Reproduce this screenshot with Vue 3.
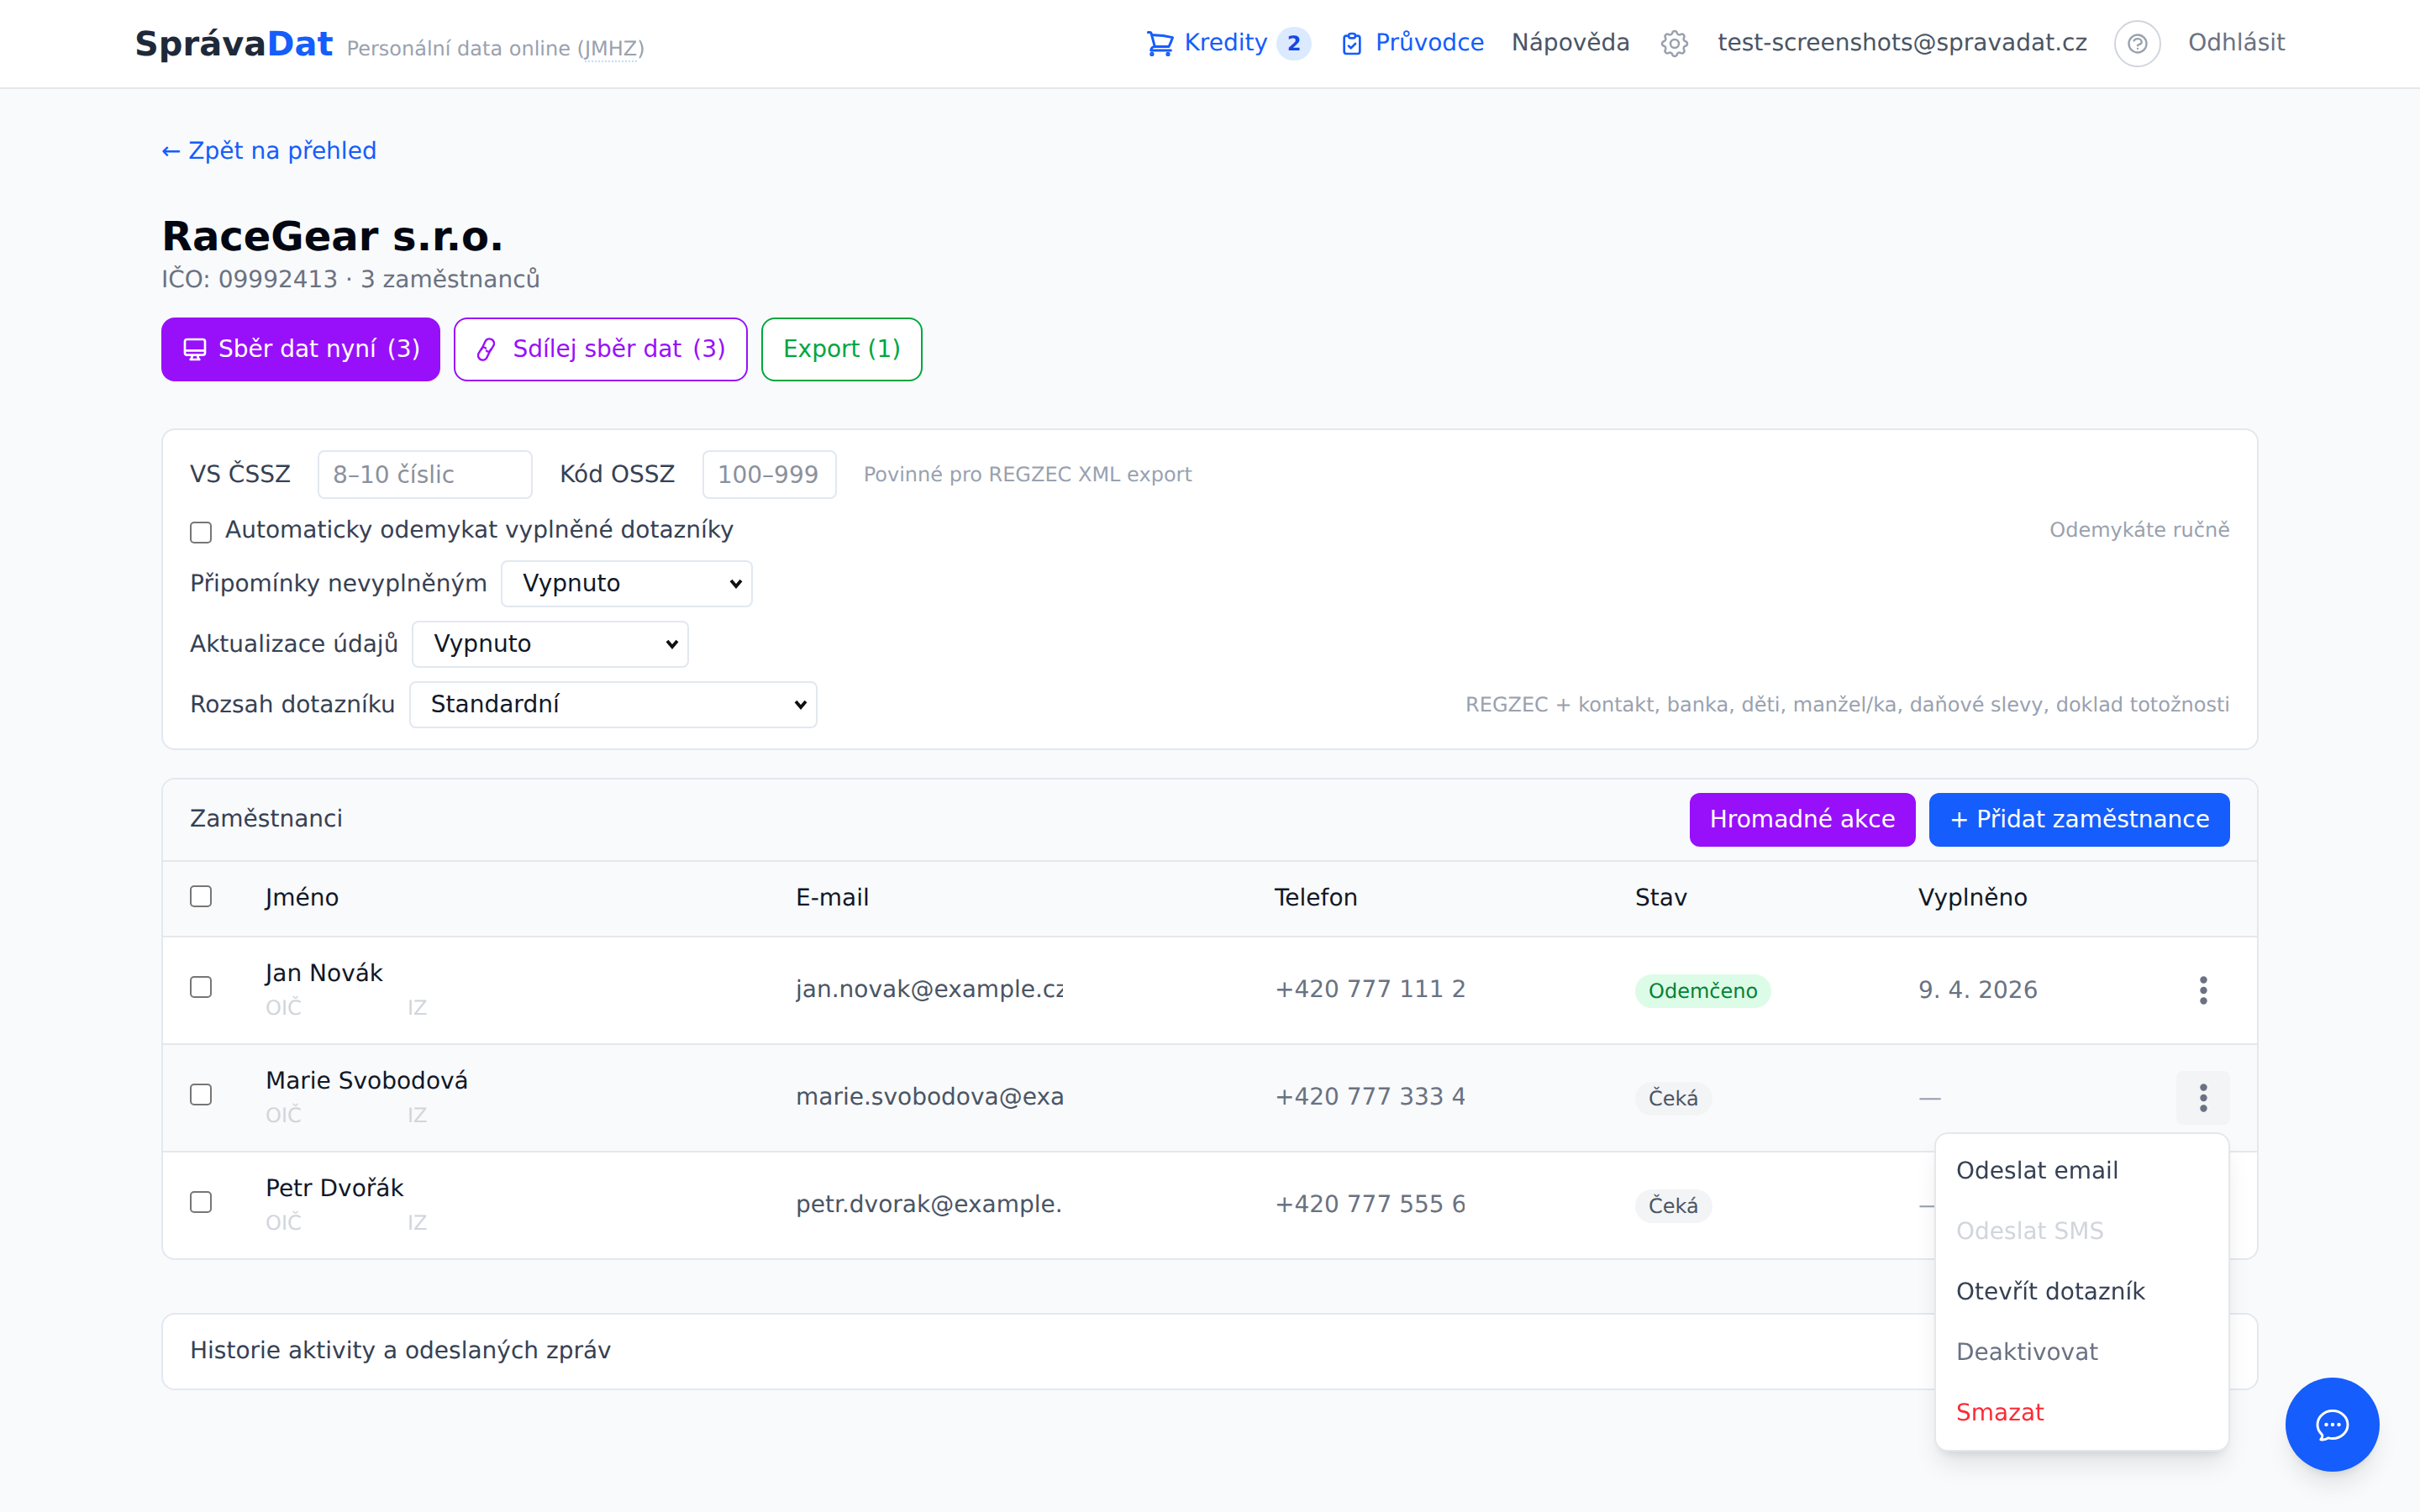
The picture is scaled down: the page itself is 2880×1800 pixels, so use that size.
<script setup>
import { ref } from 'vue'

const employees = [
  { name: 'Jan Novák', email: 'jan.novak@example.cz', phone: '+420 777 111 222', status: 'Odemčeno', unlocked: true, filled: '9. 4. 2026' },
  { name: 'Marie Svobodová', email: 'marie.svobodova@example.cz', phone: '+420 777 333 444', status: 'Čeká', unlocked: false, filled: '—' },
  { name: 'Petr Dvořák', email: 'petr.dvorak@example.cz', phone: '+420 777 555 666', status: 'Čeká', unlocked: false, filled: '—' }
]

const menuItems = [
  { label: 'Odeslat email', kind: 'normal' },
  { label: 'Odeslat SMS', kind: 'disabled' },
  { label: 'Otevřít dotazník', kind: 'normal' },
  { label: 'Deaktivovat', kind: 'muted' },
  { label: 'Smazat', kind: 'danger' }
]

// second row has its menu open in the screenshot
const openRow = ref(1)

function toggleMenu(i) {
  openRow.value = openRow.value === i ? null : i
}
</script>

<template>
  <div class="page">
    <header class="topbar">
      <div class="topbar-inner">
        <div class="brand">
          <span class="logo">Správa<span class="logo-accent">Dat</span></span>
          <span class="tagline">Personální data online (<span class="abbr">JMHZ</span>)</span>
        </div>
        <nav class="nav">
          <a class="nav-link blue credits">
            <svg class="cart" viewBox="0 0 24 24" fill="none" stroke="currentColor" stroke-width="2" stroke-linecap="round" stroke-linejoin="round"><path d="M2.25 3h1.386c.51 0 .955.343 1.087.835l.383 1.437M7.5 14.25a3 3 0 0 0-3 3h15.75m-12.75-3h11.218c1.121-2.3 2.1-4.684 2.924-7.138a60.114 60.114 0 0 0-16.536-1.84M7.5 14.25 5.106 5.272M6 20.25a.75.75 0 1 1-1.5 0 .75.75 0 0 1 1.5 0Zm12.75 0a.75.75 0 1 1-1.5 0 .75.75 0 0 1 1.5 0Z" /></svg>
            <span class="nav-text">Kredity</span>
            <span class="credit-badge">2</span>
          </a>
          <a class="nav-link blue guide">
            <svg class="clip" viewBox="0 0 24 24" fill="none" stroke="currentColor" stroke-width="2" stroke-linecap="round" stroke-linejoin="round"><path d="M9 5H7a2 2 0 00-2 2v12a2 2 0 002 2h10a2 2 0 002-2V7a2 2 0 00-2-2h-2M9 5a2 2 0 002 2h2a2 2 0 002-2M9 5a2 2 0 012-2h2a2 2 0 012 2m-6 9l2 2 4-4" /></svg>
            <span class="nav-text">Průvodce</span>
          </a>
          <a class="nav-link"><span class="nav-text">Nápověda</span></a>
          <svg class="cog" viewBox="0 0 24 24" fill="none" stroke="currentColor" stroke-width="1.5" stroke-linecap="round" stroke-linejoin="round"><path d="M10.325 4.317c.426-1.756 2.924-1.756 3.35 0a1.724 1.724 0 002.573 1.066c1.543-.94 3.31.826 2.37 2.37a1.724 1.724 0 001.065 2.572c1.756.426 1.756 2.924 0 3.35a1.724 1.724 0 00-1.066 2.573c.94 1.543-.826 3.31-2.37 2.37a1.724 1.724 0 00-2.572 1.065c-.426 1.756-2.924 1.756-3.35 0a1.724 1.724 0 00-2.573-1.066c-1.543.94-3.31-.826-2.37-2.37a1.724 1.724 0 00-1.065-2.572c-1.756-.426-1.756-2.924 0-3.35a1.724 1.724 0 001.066-2.573c-.94-1.543.826-3.31 2.37-2.37.996.608 2.296.07 2.572-1.065z" /><path d="M15 12a3 3 0 11-6 0 3 3 0 016 0z" /></svg>
          <span class="nav-link"><span class="nav-text">test-screenshots@spravadat.cz</span></span>
          <span class="help-circle">
            <svg viewBox="0 0 24 24" fill="none" stroke="currentColor" stroke-width="2" stroke-linecap="round" stroke-linejoin="round"><path d="M8.228 9c.549-1.165 2.03-2 3.772-2 2.21 0 4 1.343 4 3 0 1.4-1.278 2.575-3.006 2.907-.542.104-.994.54-.994 1.093m0 3h.01M21 12a9 9 0 11-18 0 9 9 0 0118 0z" /></svg>
          </span>
          <a class="nav-link logout"><span class="nav-text">Odhlásit</span></a>
        </nav>
      </div>
    </header>

    <main class="main">
      <a class="back">← Zpět na přehled</a>
      <h1 class="title">RaceGear s.r.o.</h1>
      <p class="subtitle">IČO: 09992413 · 3 zaměstnanců</p>

      <div class="actions">
        <button class="btn btn-purple">
          <svg viewBox="0 0 24 24" fill="none" stroke="currentColor" stroke-width="2" stroke-linecap="round" stroke-linejoin="round"><path d="M9.75 17L9 20l-1 1h8l-1-1-.75-3M3 13h18M5 17h14a2 2 0 002-2V5a2 2 0 00-2-2H5a2 2 0 00-2 2v10a2 2 0 002 2z" /></svg>
          <span>Sběr dat nyní <span class="count">(3)</span></span>
        </button>
        <button class="btn btn-outline-purple">
          <svg class="link-icon" viewBox="0 0 21 28" fill="none" stroke="currentColor" stroke-width="2.4" stroke-linecap="round" stroke-linejoin="round"><path d="M5 14L9.5 4.6a5.5 5.5 0 0 1 10 4.6L16 15a3 3 0 0 1-5 .5" /><path d="M16 14L11.5 23.4a5.5 5.5 0 0 1-10-4.6L5 13a3 3 0 0 1 5-.5" /></svg>
          <span>Sdílej sběr dat <span class="count">(3)</span></span>
        </button>
        <button class="btn btn-outline-green">Export (1)</button>
      </div>

      <section class="card settings">
        <div class="row row-wide">
          <label class="label">VS ČSSZ</label>
          <input class="input input-vs" placeholder="8–10 číslic" />
          <label class="label">Kód OSSZ</label>
          <input class="input input-ossz" placeholder="100–999" />
          <span class="hint">Povinné pro REGZEC XML export</span>
        </div>
        <div class="row row-between">
          <label class="check-label"><input type="checkbox" class="check" />Automaticky odemykat vyplněné dotazníky</label>
          <span class="hint">Odemykáte ručně</span>
        </div>
        <div class="row">
          <label class="label">Připomínky nevyplněným</label>
          <select class="select select-a"><option>Vypnuto</option></select>
        </div>
        <div class="row">
          <label class="label">Aktualizace údajů</label>
          <select class="select select-b"><option>Vypnuto</option></select>
        </div>
        <div class="row row-between">
          <div class="row">
            <label class="label">Rozsah dotazníku</label>
            <select class="select select-c"><option>Standardní</option></select>
          </div>
          <span class="hint">REGZEC + kontakt, banka, děti, manžel/ka, daňové slevy, doklad totožnosti</span>
        </div>
      </section>

      <section class="card staff">
        <div class="staff-head">
          <span class="section-title">Zaměstnanci</span>
          <div class="staff-buttons">
            <button class="small-btn purple">Hromadné akce</button>
            <button class="small-btn blue-bg">+ Přidat zaměstnance</button>
          </div>
        </div>
        <table class="table">
          <colgroup>
            <col class="c-check" /><col class="c-name" /><col class="c-email" /><col class="c-phone" /><col class="c-status" /><col class="c-filled" /><col class="c-menu" />
          </colgroup>
          <thead>
            <tr>
              <th class="cell-check"><input type="checkbox" class="check" /></th>
              <th>Jméno</th>
              <th>E-mail</th>
              <th>Telefon</th>
              <th>Stav</th>
              <th>Vyplněno</th>
              <th></th>
            </tr>
          </thead>
          <tbody>
            <tr v-for="(emp, i) in employees" :key="emp.name" :class="{ hovered: i === 1 }">
              <td class="cell-check"><input type="checkbox" class="check" /></td>
              <td>
                <div class="emp-name">{{ emp.name }}</div>
                <div class="emp-meta"><span class="meta-oic">OIČ</span><span>IZ</span></div>
              </td>
              <td><div class="clip-email">{{ emp.email }}</div></td>
              <td><div class="clip-phone">{{ emp.phone }}</div></td>
              <td><span class="status" :class="{ unlocked: emp.unlocked }">{{ emp.status }}</span></td>
              <td class="filled" :class="{ empty: !emp.unlocked }">{{ emp.filled }}</td>
              <td class="cell-menu">
                <div class="menu-wrap">
                  <button class="dots" :class="{ active: openRow === i }" @click="toggleMenu(i)">
                    <svg viewBox="0 0 9 34" fill="#6a7282"><circle cx="4.5" cy="4.5" r="4.2" /><circle cx="4.5" cy="17" r="4.2" /><circle cx="4.5" cy="29.5" r="4.2" /></svg>
                  </button>
                  <div v-if="openRow === i" class="menu">
                    <div v-for="item in menuItems" :key="item.label" class="menu-item" :class="item.kind">{{ item.label }}</div>
                  </div>
                </div>
              </td>
            </tr>
          </tbody>
        </table>
      </section>

      <section class="card history">
        <span class="section-title">Historie aktivity a odeslaných zpráv</span>
      </section>
    </main>

    <button class="chat">
      <svg viewBox="0 0 24 24" fill="none" stroke="currentColor" stroke-width="1.5" stroke-linecap="round" stroke-linejoin="round"><path d="M8.625 12a.375.375 0 1 1-.75 0 .375.375 0 0 1 .75 0Zm0 0H8.25m4.125 0a.375.375 0 1 1-.75 0 .375.375 0 0 1 .75 0Zm0 0H12m4.125 0a.375.375 0 1 1-.75 0 .375.375 0 0 1 .75 0Zm0 0h-.375M21 12c0 4.556-4.03 8.25-9 8.25a9.764 9.764 0 0 1-2.555-.337A5.972 5.972 0 0 1 5.41 20.97a5.969 5.969 0 0 1-.474-.065 4.48 4.48 0 0 0 .978-2.025c.09-.457-.133-.901-.467-1.226C3.93 16.178 3 14.189 3 12c0-4.556 4.03-8.25 9-8.25s9 3.694 9 8.25Z" /></svg>
    </button>
  </div>
</template>

<style scoped>
.page {
  min-height: 1800px;
  background: #f9fafb;
  font-family: "DejaVu Sans", sans-serif;
  font-size: 28px;
  line-height: 40px;
  color: #364153;
  text-rendering: geometricPrecision;
}

.topbar {
  background: #fff;
  border-bottom: 2px solid #e5e7eb;
}

.topbar-inner {
  max-width: 2560px;
  height: 104px;
  margin: 0 auto;
  display: flex;
  align-items: center;
  justify-content: space-between;
}

.brand {
  display: flex;
  align-items: baseline;
  gap: 16px;
  padding-top: 6px;
}

.logo {
  font-size: 40px;
  font-weight: 700;
  color: #1e2939;
}

.logo-accent {
  color: #155dfc;
}

.tagline {
  font-size: 24px;
  color: #99a1af;
}

.abbr {
  border-bottom: 2px dotted #bedbff;
}

.nav {
  display: flex;
  align-items: center;
  gap: 32px;
}

.nav-link {
  display: flex;
  align-items: center;
  color: #4a5565;
}

.nav-text {
  margin-top: -2px;
}

.nav-link.blue {
  color: #155dfc;
}

.credits {
  gap: 10px;
}

.guide {
  gap: 12px;
}

.cart {
  width: 36px;
  height: 36px;
}

.clip {
  width: 32px;
  height: 32px;
}

.credit-badge {
  width: 42px;
  height: 40px;
  border-radius: 20px;
  background: #dbeafe;
  color: #1447e6;
  font-size: 24px;
  font-weight: 700;
  display: flex;
  align-items: center;
  justify-content: center;
}

.cog {
  width: 40px;
  height: 40px;
  color: #99a1af;
}

.help-circle {
  width: 56px;
  height: 56px;
  border: 2px solid #d1d5dc;
  border-radius: 50%;
  box-sizing: border-box;
  color: #99a1af;
  display: flex;
  align-items: center;
  justify-content: center;
}

.help-circle svg {
  width: 28px;
  height: 28px;
}

.logout {
  color: #6a7282;
}

.main {
  max-width: 2496px;
  margin: 0 auto;
  padding-top: 54px;
}

.back {
  display: block;
  color: #155dfc;
}

.title {
  margin: 51px 0 0;
  font-size: 48px;
  line-height: 62px;
  font-weight: 700;
  color: #030712;
}

.subtitle {
  margin: 0;
  color: #6a7282;
}

.actions {
  display: flex;
  gap: 16px;
  margin-top: 25px;
}

.btn {
  height: 76px;
  padding: 0 24px;
  border-radius: 16px;
  font: inherit;
  display: flex;
  align-items: center;
  gap: 12px;
  background: transparent;
  cursor: pointer;
  white-space: nowrap;
}

.btn svg {
  width: 32px;
  height: 32px;
}

.btn svg.link-icon {
  width: 21px;
  height: 28px;
  margin-left: 2px;
  margin-right: 9px;
}

.count {
  margin-left: 4px;
}

.btn-purple {
  background: #9810fa;
  border: 0;
  color: #fff;
}

.btn-outline-purple {
  background: #fff;
  border: 2px solid #9810fa;
  color: #9810fa;
}

.btn-outline-green {
  background: #fff;
  border: 2px solid #00a63e;
  color: #00a63e;
}

.card {
  background: #fff;
  border: 2px solid #e2e8f0;
  border-radius: 16px;
}

.settings {
  margin-top: 56px;
  padding: 24px 32px;
  display: flex;
  flex-direction: column;
  gap: 16px;
}

.row {
  display: flex;
  align-items: center;
  gap: 16px;
}

.row-wide {
  gap: 32px;
  margin-bottom: 1px;
}

.row-between {
  justify-content: space-between;
}

.input {
  height: 58px;
  box-sizing: border-box;
  padding: 0 16px;
  border: 2px solid #e2e8f0;
  border-radius: 8px;
  font: inherit;
  color: #101828;
  background: #fff;
}

.input::placeholder {
  color: #8b919c;
}

.input-vs {
  width: 256px;
}

.input-ossz {
  width: 160px;
}

.hint {
  font-size: 24px;
  color: #99a1af;
}

.check-label {
  display: flex;
  align-items: center;
  gap: 16px;
}

.check {
  appearance: none;
  width: 26px;
  height: 26px;
  margin: 0;
  box-sizing: border-box;
  border: 2px solid #767676;
  border-radius: 5px;
  background: #fff;
  flex: none;
}

.check-label .check {
  position: relative;
  top: 3px;
}

.select {
  appearance: none;
  height: 56px;
  box-sizing: border-box;
  padding: 0 40px 0 24px;
  border: 2px solid #e2e8f0;
  border-radius: 8px;
  font: inherit;
  color: #101828;
  background: #fff url("data:image/svg+xml,%3Csvg xmlns='http://www.w3.org/2000/svg' viewBox='0 0 16 12'%3E%3Cpath d='M2 2l6 7 6-7' fill='none' stroke='%23101010' stroke-width='3.8'/%3E%3C/svg%3E") no-repeat right 10px center / 16px 12px;
}

.select-a {
  width: 300px;
}

.select-b {
  width: 330px;
}

.select-c {
  width: 486px;
}

.staff {
  margin-top: 33px;
}

.staff-head {
  display: flex;
  align-items: center;
  justify-content: space-between;
  padding: 16px 32px;
  background: #f9fafb;
  border-bottom: 2px solid #e5e7eb;
  border-radius: 14px 14px 0 0;
}

.staff-head .section-title {
  margin-top: -2px;
}

.staff-buttons {
  display: flex;
  gap: 16px;
}

.small-btn {
  height: 64px;
  padding: 0 24px;
  border: 0;
  border-radius: 12px;
  color: #fff;
  font: inherit;
}

.small-btn.purple {
  background: #9810fa;
}

.small-btn.blue-bg {
  background: #155dfc;
}

.table {
  width: 100%;
  border-collapse: collapse;
  table-layout: fixed;
}

.c-check { width: 122px; }
.c-name { width: 631px; }
.c-email { width: 570px; }
.c-phone { width: 429px; }
.c-status { width: 337px; }
.c-filled { width: 300px; }

th {
  height: 86px;
  padding: 0 0 2px;
  text-align: left;
  font-weight: 400;
  color: #101828;
  background: #f9fafb;
  border-bottom: 2px solid #e5e7eb;
}

td {
  height: 126px;
  padding: 0;
  border-bottom: 2px solid #e5e7eb;
  color: #4a5565;
}

tbody tr:last-child td {
  border-bottom: 0;
}

.hovered td {
  background: #f9fafb;
}

.cell-check {
  padding-left: 32px;
}

.cell-check .check {
  position: relative;
  top: -4px;
  display: block;
}

th.cell-check .check {
  top: -2px;
}

.emp-name {
  color: #101828;
  line-height: 40px;
  margin-top: -2px;
}

.emp-meta {
  font-size: 24px;
  line-height: 36px;
  margin-top: 3px;
  color: #d1d5dc;
  display: flex;
}

.meta-oic {
  width: 169px;
}

.clip-email {
  width: 318px;
  overflow: hidden;
  white-space: nowrap;
  margin-top: -2px;
}

.clip-phone {
  width: 226px;
  overflow: hidden;
  white-space: nowrap;
  color: #6a7282;
  margin-top: -2px;
}

.status {
  display: inline-block;
  height: 40px;
  padding: 0 16px;
  border-radius: 20px;
  background: #f3f4f6;
  color: #4a5565;
  font-size: 24px;
  line-height: 40px;
  vertical-align: middle;
}

.status.unlocked {
  background: #dcfce7;
  color: #008236;
}

.filled {
  color: #6a7282;
}

.filled.empty {
  color: #99a1af;
}

.cell-menu {
  padding-right: 32px;
}

.menu-wrap {
  position: relative;
  width: 64px;
  margin-left: auto;
}

.dots {
  width: 64px;
  height: 64px;
  padding: 0;
  border: 0;
  border-radius: 8px;
  background: transparent;
  display: flex;
  align-items: center;
  justify-content: center;
}

.dots svg {
  width: 9px;
  height: 34px;
}

.dots.active {
  background: #f3f4f6;
}

.menu {
  position: absolute;
  top: 73px;
  right: 0;
  z-index: 20;
  width: 352px;
  box-sizing: border-box;
  padding: 8px 0;
  background: #fff;
  border: 2px solid #e5e7eb;
  border-radius: 16px;
  box-shadow: 0 20px 30px -6px rgba(0, 0, 0, 0.1), 0 8px 12px -6px rgba(0, 0, 0, 0.1);
}

.menu-item {
  height: 72px;
  padding: 0 24px;
  display: flex;
  align-items: center;
  color: #364153;
}

.menu-item.disabled {
  color: #d1d5dc;
}

.menu-item.muted {
  color: #6a7282;
}

.menu-item.danger {
  color: #fb2c36;
}

.history {
  margin-top: 63px;
  padding: 23px 32px 25px;
}

.chat {
  position: fixed;
  right: 48px;
  bottom: 48px;
  width: 112px;
  height: 112px;
  padding: 0;
  border: 0;
  border-radius: 50%;
  background: #155dfc;
  color: #fff;
  display: flex;
  align-items: center;
  justify-content: center;
  box-shadow: 0 20px 30px -6px rgba(0, 0, 0, 0.1), 0 8px 12px -6px rgba(0, 0, 0, 0.1);
}

.chat svg {
  width: 48px;
  height: 48px;
}
</style>

<style>
body {
  background: #f9fafb;
}
</style>
